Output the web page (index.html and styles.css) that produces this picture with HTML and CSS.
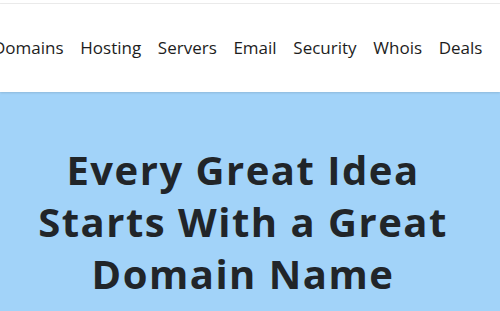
FILE: index.html
```html
<!DOCTYPE html>
<html lang="en">
<head>
  <meta charset="UTF-8">
  <meta name="viewport" content="width=device-width, initial-scale=1.0">
  <title>Domains</title>
  <link rel="stylesheet" href="styles.css">
</head>
<body>
  <div class="topline"></div>
  <header class="site-header">
    <nav class="main-nav">
      <a href="#">Domains</a>
      <a href="#">Hosting</a>
      <a href="#">Servers</a>
      <a href="#">Email</a>
      <a href="#">Security</a>
      <a href="#">Whois</a>
      <a href="#">Deals</a>
    </nav>
  </header>

  <section class="hero">
    <h1>Every Great Idea Starts With a Great Domain Name</h1>
  </section>
</body>
</html>
```

FILE: styles.css
```css
body {
  font-family: 'Open Sans', 'Noto Sans', sans-serif;
  margin: 0;
  padding: 0;
  background-color: #a2d3f9;
  color: #212529;
}

.topline {
  height: 3px;
  background-color: #fff;
  border-bottom: 1px solid #ececec;
}

.site-header {
  background-color: #fff;
  height: 88px;
  display: flex;
  align-items: center;
  box-shadow: 0 1px 2px rgba(0, 0, 0, 0.12);
  position: relative;
}

.main-nav {
  display: flex;
  gap: 16.7px;
  margin-left: -7px;
  margin-top: -1px;
}

.main-nav a {
  color: #1d1d1d;
  text-decoration: none;
  font-size: 17px;
}

.hero {
  padding: 52px 0 0;
  width: 486px;
  display: flex;
  justify-content: center;
}

.hero h1 {
  margin: 0;
  width: 440px;
  text-align: center;
  font-size: 40px;
  font-weight: 700;
  letter-spacing: 1.5px;
  line-height: 52px;
}
```
